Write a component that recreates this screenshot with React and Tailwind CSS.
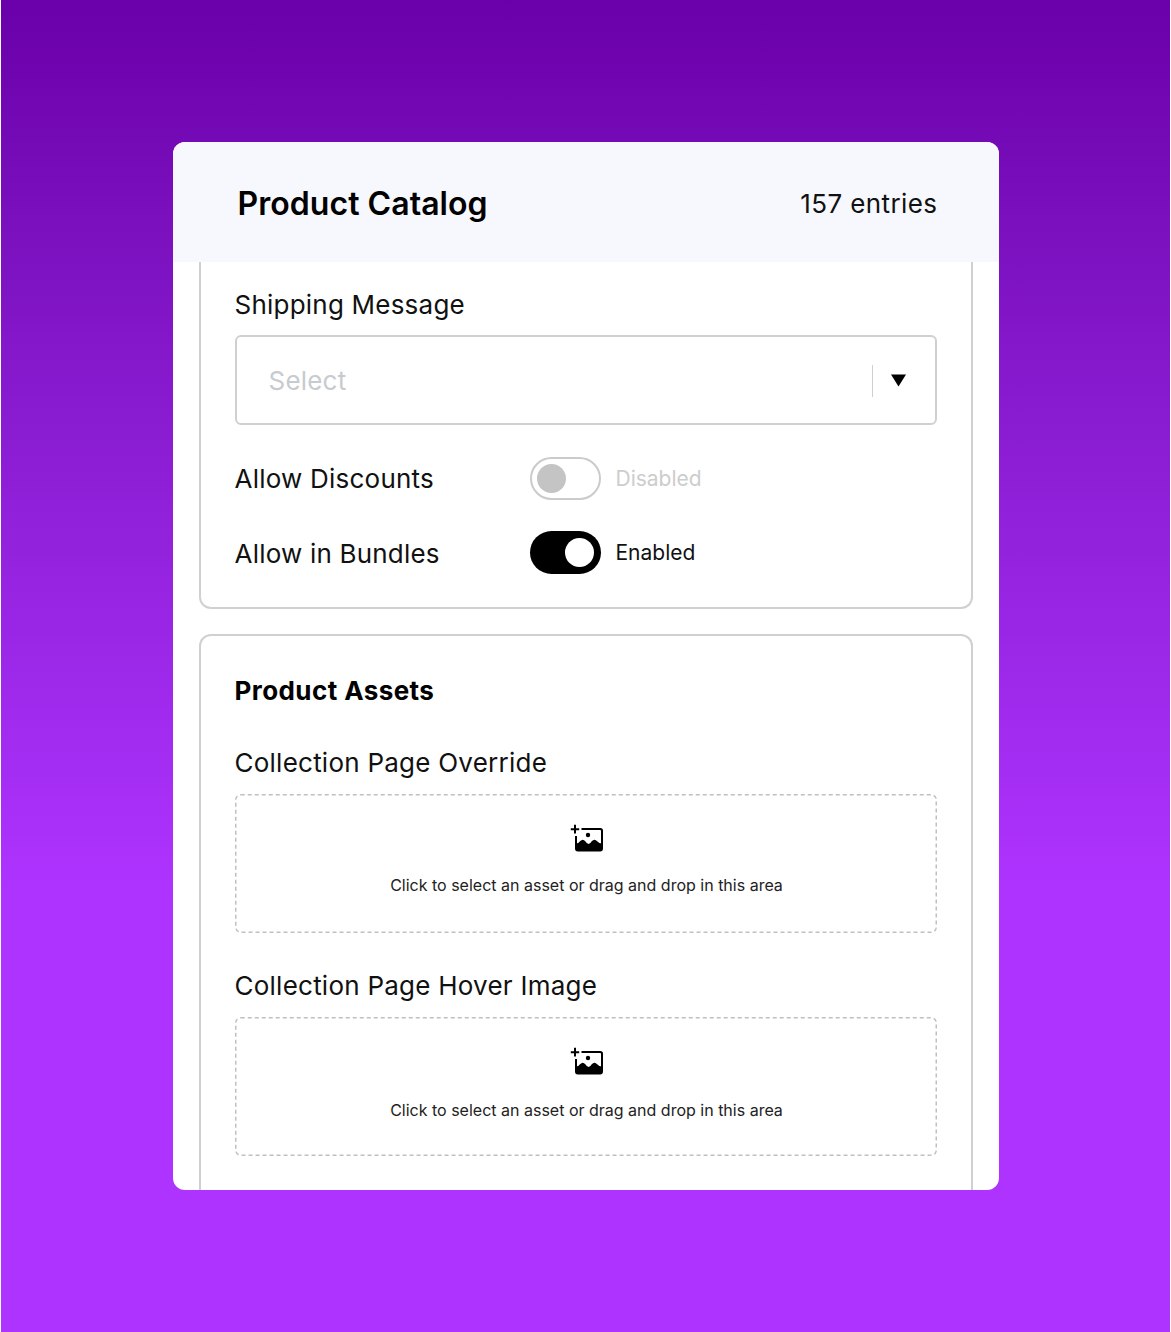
import React from 'react';

const AssetIcon = () => (
  <svg width="34" height="30" viewBox="0 0 34 30" fill="none" className="ml-[2px]">
    <path d="M5 0.8V9.6M0.8 5.2H9.2" stroke="#000" strokeWidth="2" />
    <path
      d="M11.5 5H30.2Q32 5 32 6.8V24.5Q32 26.4 30.2 26.4H7.8Q6 26.4 6 24.5V12"
      stroke="#000"
      strokeWidth="2"
    />
    <path
      d="M6 19.5Q8.5 19.5 10 17.3Q12.8 14.2 15.3 17.3Q17 20 18.6 20Q20.2 20 21.7 17.3Q24.5 14.2 27.2 17.3Q29 19.5 32 19.5V25.5Q32 26.8 31 26.8H7.5Q6 26.8 6 25.2Z"
      fill="#000"
    />
    <circle cx="18" cy="11" r="2.2" fill="#000" />
  </svg>
);

const DashedOutline = () => (
  <svg className="absolute inset-0 h-full w-full" fill="none">
    <rect
      x="0.75"
      y="0.75"
      width="700.5"
      height="137.5"
      rx="5"
      stroke="#c0c0c0"
      strokeWidth="1.5"
      strokeDasharray="4 3"
    />
  </svg>
);

const AssetField = ({ label, hintClass }) => (
  <div>
    <div className="text-[26px] leading-8 tracking-[0.24px] text-[#111]">{label}</div>
    <div className="relative mt-[15px] flex h-[139px] flex-col items-center pt-[30px]">
      <DashedOutline />
      <AssetIcon />
      <span className={hintClass}>
        Click to select an asset or drag and drop in this area
      </span>
    </div>
  </div>
);

const Toggle = ({ on }) => (
  <span
    className={
      on
        ? 'flex h-[43px] w-[71px] items-center justify-end rounded-full bg-black pr-[7px]'
        : 'flex h-[43px] w-[71px] items-center rounded-full border-2 border-[#cbcbcb] pl-[5px]'
    }
  >
    <span className={on ? 'size-[29px] rounded-full bg-white' : 'size-[29px] rounded-full bg-[#c4c4c4]'} />
  </span>
);

const App = () => {
  return (
    <div className="h-[1332px] w-[1171px] bg-white px-px font-['Inter',sans-serif] text-black">
      <div className="flex h-full justify-center bg-linear-to-b from-[#6a00a9] to-[#ae33ff] to-67% pt-[142px]">
        <div className="flex h-[1048px] w-[826px] flex-col overflow-hidden rounded-xl bg-white">
          {/* Header */}
          <header className="flex h-[120px] shrink-0 items-center justify-between bg-[#f7f8fd] pt-[3px] pr-[61px] pl-[65px]">
            <h1 className="text-[32px] leading-10 font-semibold tracking-[0.05px]">Product Catalog</h1>
            <span className="text-[26px] leading-8 tracking-[0.4px] text-[#111]">157 entries</span>
          </header>

          {/* Shipping and discounts */}
          <section className="mx-[26px] h-[347px] shrink-0 rounded-b-xl border-2 border-t-0 border-[#cfd0d1] px-[34px] pt-[27px]">
            <div className="text-[26px] leading-8 tracking-[0.22px] text-[#111]">Shipping Message</div>
            <div className="mt-[14px] flex h-[90px] items-center rounded-md border-2 border-[#cfd0d1] pt-px pr-[29px] pl-[32px]">
              <span className="flex-1 text-[26px] leading-8 tracking-[0.2px] text-[#c8cbce]">Select</span>
              <span className="mr-[18px] h-8 w-px bg-[#d0d0d0]" />
              <svg width="15" height="13" viewBox="0 0 15 13">
                <path d="M0 0.5H15L7.5 12.5Z" fill="#000" />
              </svg>
            </div>
            <div className="mt-8 flex items-center">
              <span className="w-[295px] text-[26px] leading-[30px] tracking-[0.22px] text-[#111]">Allow Discounts</span>
              <Toggle />
              <span className="ml-[15px] text-[21px] text-[#cdcdcd]">Disabled</span>
            </div>
            <div className="mt-[31px] flex items-center">
              <span className="w-[295px] pt-[2px] text-[26px] leading-8 tracking-[0.2px] text-[#111]">Allow in Bundles</span>
              <Toggle on />
              <span className="ml-[15px] text-[21px] text-[#111]">Enabled</span>
            </div>
          </section>

          {/* Assets */}
          <section className="mx-[26px] mt-[25px] flex-1 rounded-t-xl border-2 border-b-0 border-[#cfd0d1] px-[34px] pt-[39px]">
            <h2 className="mb-10 text-[26px] leading-8 font-bold tracking-[0.42px]">Product Assets</h2>
            <div className="flex flex-col gap-[37px]">
              <AssetField
                label="Collection Page Override"
                hintClass="mt-[19px] ml-[2px] text-base leading-6 text-[#222]"
              />
              <AssetField
                label="Collection Page Hover Image"
                hintClass="mt-[21px] ml-[2px] text-base leading-6 text-[#222]"
              />
            </div>
          </section>
        </div>
      </div>
    </div>
  );
};

export default App;
